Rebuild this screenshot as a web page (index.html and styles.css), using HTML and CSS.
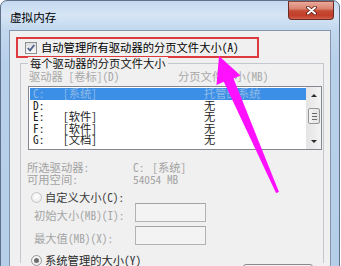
FILE: index.html
```html
<!DOCTYPE html>
<html lang="zh-CN">
<head>
<meta charset="utf-8">
<title>虚拟内存</title>
<link rel="stylesheet" href="styles.css">
</head>
<body>
<div class="window">
  <div class="titlebar">
    <span class="title">虚拟内存</span>
    <div class="close">
      <svg width="11" height="9" viewBox="0 0 11 9">
        <path d="M2 1.5 L9 7.5 M9 1.5 L2 7.5" stroke="#5a1a14" stroke-width="3.6" stroke-linecap="round"/>
        <path d="M2 1.5 L9 7.5 M9 1.5 L2 7.5" stroke="#ffffff" stroke-width="2" stroke-linecap="round"/>
      </svg>
    </div>
  </div>
  <div class="client">
    <div class="annot">
      <span class="checkbox">
        <svg width="10" height="10" viewBox="0 0 10 10"><path d="M1.8 5 L4 7.4 L8.3 2" fill="none" stroke="#4b5f8c" stroke-width="1.7"/></svg>
      </span>
      <span class="annot-text">自动管理所有驱动器的分页文件大小(A)</span>
    </div>
    <div class="group">
      <div class="group-label">每个驱动器的分页文件大小</div>
      <div class="col-head"><span class="c1">驱动器 [卷标](D)</span><span class="c2">分页文件大小(MB)</span></div>
      <div class="listbox">
        <div class="rows">
          <div class="row selected"><span>C:</span><span>[系统]</span><span>托管的系统</span></div>
          <div class="row"><span>D:</span><span></span><span>无</span></div>
          <div class="row"><span>E:</span><span>[软件]</span><span>无</span></div>
          <div class="row"><span>F:</span><span>[软件]</span><span>无</span></div>
          <div class="row"><span>G:</span><span>[文档]</span><span>无</span></div>
        </div>
        <div class="scrollbar">
          <div class="sb-btn"><span class="tri-up"></span></div>
          <div class="sb-track"><div class="thumb"><span></span><span></span><span></span></div></div>
          <div class="sb-btn"><span class="tri-down"></span></div>
        </div>
      </div>
      <div class="info">
        <span>所选驱动器:</span><span>C:<span class="gap">[系统]</span></span>
        <span>可用空间:</span><span>54054 MB</span>
      </div>
      <div class="radio-row custom">
        <span class="radio"></span><span>自定义大小(C):</span>
      </div>
      <div class="field-row">
        <span class="field-label">初始大小(MB)(I):</span><span class="field"></span>
      </div>
      <div class="field-row second">
        <span class="field-label">最大值(MB)(X):</span><span class="field"></span>
      </div>
      <div class="radio-row system">
        <span class="radio on"><span class="dot"></span></span><span class="sys-text">系统管理的大小(Y)</span>
        <span class="button"></span>
      </div>
    </div>
  </div>
</div>
<svg class="arrow" width="341" height="266" viewBox="0 0 341 266">
  <polygon points="219,56 240.5,75.5 233.5,78.5 279,192 276,193 223.8,81.8 216.5,85" fill="#ff10ff"/>
</svg>
</body>
</html>
```
FILE: styles.css
```css
* { box-sizing: border-box; }
html, body { margin: 0; padding: 0; }
body {
  width: 341px;
  height: 266px;
  overflow: hidden;
  position: relative;
  background: #ffffff;
  font-family: "Noto Sans Mono CJK SC", "Noto Sans CJK SC", sans-serif;
  font-size: 11.3px;
  color: #000;
}
.window {
  width: 340px;
  height: 290px;
  border: 1px solid #5f7189;
  border-radius: 7px 7px 0 0;
  background: linear-gradient(180deg, #c4d9ef 0px, #d6e5f5 14px, #c2d8ee 29px, #b8d0ea 60px, #b6cfe9 100%);
}
.titlebar {
  height: 29px;
  display: flex;
  justify-content: space-between;
  align-items: flex-start;
}
.title {
  margin-top: 9px;
  padding-left: 9px;
  line-height: 15px;
  font-size: 11.6px;
  color: #000;
}
.close {
  width: 46px;
  height: 19px;
  margin-right: 5px;
  border: 1px solid #6b2b24;
  border-top-color: #8b4a40;
  border-radius: 0 0 4px 4px;
  background: linear-gradient(180deg, #e9a99b 0%, #d9826f 40%, #c54a34 52%, #c23e2a 80%, #d0614a 100%);
  display: flex;
  align-items: center;
  justify-content: center;
}
.client {
  margin: 0 8px;
  height: 250px;
  border: 1px solid #8396ad;
  background: #f0f0f0;
}
.annot {
  margin: 6px 0 0 6px;
  width: 243px;
  height: 21px;
  border: 2px solid #df3a3e;
  display: flex;
  align-items: center;
  padding-left: 7px;
  gap: 4px;
}
.checkbox {
  width: 12px;
  height: 12px;
  border: 1px solid #8e8f8f;
  background: linear-gradient(180deg, #dedede, #f8f8f8);
  display: flex;
  align-items: center;
  justify-content: center;
}
.annot-text { line-height: 13px; }
.group {
  margin: 5px 6px 0 10px;
  border: 1px solid #c2c8ce;
  border-bottom: none;
  height: 200px;
}
.group-label {
  width: max-content;
  margin: -7px 0 0 7px;
  padding: 0 2px;
  background: #f0f0f0;
  line-height: 13px;
  color: #111;
}
.col-head {
  display: flex;
  line-height: 13px;
  padding-left: 8px;
  color: #a8a8a8;
}
.col-head .c1 { width: 149px; }
.listbox {
  margin: 3px 1px 0 7px;
  height: 64px;
  border: 1px solid #828790;
  background: #ffffff;
  display: flex;
}
.rows {
  flex: 1;
  padding: 1px 0 0 1px;
}
.row {
  display: grid;
  grid-template-columns: 30px 141px 1fr;
  height: 11.5px;
  line-height: 11.5px;
  padding-left: 3px;
  color: #222;
}
.row.selected {
  background: #3b8fe6;
  color: #8fb9e6;
}
.scrollbar {
  width: 15px;
  display: flex;
  flex-direction: column;
  background: linear-gradient(90deg, #e4e4e4, #f3f3f3);
}
.sb-btn {
  height: 16px;
  display: flex;
  align-items: center;
  justify-content: center;
}
.tri-up {
  width: 0; height: 0;
  border-left: 3px solid transparent;
  border-right: 3px solid transparent;
  border-bottom: 3px solid #2a2a2a;
}
.tri-down {
  width: 0; height: 0;
  border-left: 3px solid transparent;
  border-right: 3px solid transparent;
  border-top: 3px solid #2a2a2a;
}
.sb-track { flex: 1; }
.thumb {
  margin: 5px 1px 0 2px;
  height: 16px;
  border: 1px solid #979797;
  border-radius: 2px;
  background: linear-gradient(90deg, #f4f4f4, #e2e2e2);
  display: flex;
  flex-direction: column;
  align-items: center;
  justify-content: center;
  gap: 2px;
}
.thumb span {
  width: 5px;
  height: 1px;
  background: #6a6a6a;
}
.info {
  display: grid;
  grid-template-columns: 106px auto;
  margin-top: 11px;
  padding-left: 6px;
  line-height: 12px;
  color: #a3a3a3;
}
.info .gap { margin-left: 8px; }
.radio-row {
  display: flex;
  align-items: center;
  padding-left: 10px;
  gap: 3px;
  line-height: 12px;
}
.radio-row.custom { margin-top: 6px; color: #3c3c3c; }
.radio-row.system { margin-top: 9px; align-items: flex-start; color: #2a2a2a; }
.radio {
  width: 11px;
  height: 11px;
  border-radius: 50%;
  border: 1px solid #c4c4c4;
  background: radial-gradient(circle at 50% 40%, #ffffff, #e6e6e6);
  display: flex;
  align-items: center;
  justify-content: center;
}
.radio.on { border-color: #9a9a9a; margin-top: 1px; }
.radio .dot {
  width: 5px;
  height: 5px;
  border-radius: 50%;
  background: #6d6d6d;
}
.field-row {
  display: flex;
  align-items: center;
  padding-left: 13px;
  color: #a5a5a5;
  line-height: 12px;
}
.field-row.second { margin-top: 4px; }
.field-label { width: 101px; padding-top: 4px; }
.field {
  width: 71px;
  height: 19px;
  border: 1px solid #b3b3b3;
  border-top-color: #a4a4a4;
  background: #f3f3f3;
}
.button {
  margin: 10px 10px 0 auto;
  width: 70px;
  height: 22px;
  border: 1px solid #8a8a8a;
  border-radius: 3px;
  background: linear-gradient(180deg, #f2f2f2, #e4e4e4);
}
.arrow {
  position: absolute;
  left: 0;
  top: 0;
  pointer-events: none;
}
```
